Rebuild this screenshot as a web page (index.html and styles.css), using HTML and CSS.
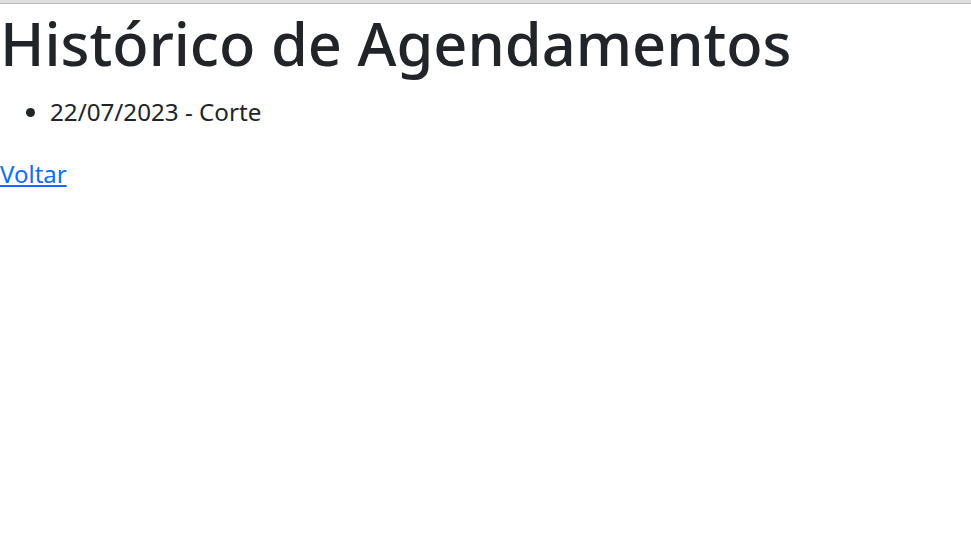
FILE: index.html
```html
<!DOCTYPE html>
<html lang="pt-BR">
<head>
<meta charset="utf-8">
<title>Histórico de Agendamentos</title>
<link rel="stylesheet" href="styles.css">
</head>
<body>
<div class="topbar"></div>
<main class="page">
  <h1 class="title">Histórico de Agendamentos</h1>
  <ul class="history">
    <li>22/07/2023 - Corte</li>
  </ul>
  <a class="back" href="#">Voltar</a>
</main>
</body>
</html>
```

FILE: styles.css
```css
html, body {
  margin: 0;
  padding: 0;
  background: #fff;
}
body {
  font-family: "Noto Sans", "Open Sans", sans-serif;
  font-size: 24px;
  line-height: 1.5;
  color: #212529;
}
.topbar {
  height: 3px;
  background: #dedede;
  border-bottom: 1px solid #bdbdbd;
}
.page {
  display: block;
}
.title {
  margin: 0 0 12px 0;
  font-size: 59.5px;
  font-weight: 500;
  line-height: 78px;
}
.history {
  margin: 0 0 26px 0;
  padding-left: 50px;
}
.history li {
  font-size: 24.2px;
}
.back {
  color: #0d6efd;
  text-decoration: underline;
}
```
